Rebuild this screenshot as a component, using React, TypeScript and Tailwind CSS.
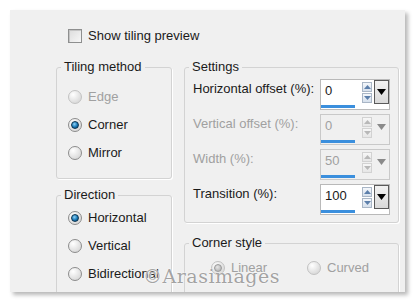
import clsx from "clsx";
import type { ReactNode } from "react";

const Radio = ({ checked, disabled }: { checked?: boolean; disabled?: boolean }) => (
  <span
    className={clsx(
      "flex size-[14px] shrink-0 items-center justify-center rounded-full border bg-[radial-gradient(circle_at_35%_30%,#ffffff,#e4e4e4_55%,#cfcfcf)]",
      disabled ? "border-[#c2c2c2]" : "border-[#8c8c8c]"
    )}
  >
    {checked && (
      <span
        className={clsx(
          "size-[8px] rounded-full border",
          disabled
            ? "border-[#9a9a9a] bg-[radial-gradient(circle_at_40%_35%,#e6e6e6,#a8a8a8)]"
            : "border-[#0d3550] bg-[radial-gradient(circle_at_40%_35%,#8fd3f7,#1576b6_55%,#0a3f66)]"
        )}
      />
    )}
  </span>
);

const RadioRow = ({
  label,
  checked,
  disabled,
}: {
  label: string;
  checked?: boolean;
  disabled?: boolean;
}) => (
  <div className="flex h-[20px] items-center gap-[6px]">
    <Radio checked={checked} disabled={disabled} />
    <span className={disabled ? "text-[#a0a0a0]" : "text-[#1a1a1a]"}>{label}</span>
  </div>
);

const Group = ({
  title,
  className,
  children,
}: {
  title: string;
  className?: string;
  children: ReactNode;
}) => (
  <fieldset
    className={clsx(
      "rounded-[3px] border border-[#d3d3d3] shadow-[1px_1px_0_#ffffff]",
      className
    )}
  >
    <legend className="ml-[4px] px-[3px] leading-[16px] text-[#1a1a1a]">{title}</legend>
    {children}
  </fieldset>
);

const Triangle = ({ up, color }: { up?: boolean; color: string }) => (
  <svg width="7" height="4" viewBox="0 0 7 4">
    <polygon points={up ? "0,4 7,4 3.5,0" : "0,0 7,0 3.5,4"} fill={color} />
  </svg>
);

const NumberField = ({ value, disabled }: { value: string; disabled?: boolean }) => (
  <div
    className={clsx(
      "flex h-[31px] w-[70px] shrink-0 flex-col border",
      disabled ? "border-[#c9c9c9] bg-[#f0f0f0]" : "border-[#b9b9b9] bg-white"
    )}
  >
    <div className="flex h-[24px]">
      <span
        className={clsx(
          "flex-1 pl-[4px] leading-[22px]",
          disabled ? "text-[#a0a0a0]" : "text-[#1a1a1a]"
        )}
      >
        {value}
      </span>
      <div className="flex w-[11px] flex-col justify-center gap-[1px]">
        <span
          className={clsx(
            "flex h-[10px] w-[10px] items-center justify-center border bg-gradient-to-b",
            disabled
              ? "border-[#d2d2d2] from-[#f7f7f7] to-[#e6e6e6]"
              : "border-[#a9b6c6] from-[#f4f7fb] to-[#d6e0ec]"
          )}
        >
          <Triangle up color={disabled ? "#b8b8b8" : "#5c7fab"} />
        </span>
        <span
          className={clsx(
            "flex h-[10px] w-[10px] items-center justify-center border bg-gradient-to-b",
            disabled
              ? "border-[#d2d2d2] from-[#f7f7f7] to-[#e6e6e6]"
              : "border-[#a9b6c6] from-[#f4f7fb] to-[#d6e0ec]"
          )}
        >
          <Triangle color={disabled ? "#b8b8b8" : "#5c7fab"} />
        </span>
      </div>
      <span
        className={clsx(
          "ml-[1px] flex w-[15px] items-center justify-center",
          disabled ? "" : "border border-[#5a5a5a] bg-gradient-to-b from-[#f2f2f2] to-[#d9d9d9]"
        )}
      >
        <svg width="9" height="6" viewBox="0 0 9 6">
          <polygon points="0,0 9,0 4.5,6" fill={disabled ? "#8a8a8a" : "#000000"} />
        </svg>
      </span>
    </div>
    <div className="flex flex-1 items-center">
      <span className="h-[3px] w-[34px] bg-[#3b8fdd]" />
    </div>
  </div>
);

const SettingRow = ({
  label,
  value,
  disabled,
}: {
  label: string;
  value: string;
  disabled?: boolean;
}) => (
  <div className="flex items-start">
    <span
      className={clsx(
        "w-[127px] leading-[20px]",
        disabled ? "text-[#a0a0a0]" : "text-[#1a1a1a]"
      )}
    >
      {label}
    </span>
    <NumberField value={value} disabled={disabled} />
  </div>
);

export default function App() {
  return (
    <div className="relative h-[304px] w-[419px] overflow-hidden bg-white font-['Liberation_Sans',Arial,sans-serif] text-[13px]">
      <div className="ml-[10px] mt-[10px] h-[282px] w-[395px] overflow-hidden bg-[#f0f0f0] pl-[46px] pt-[19px] shadow-[3px_3px_4px_rgba(0,0,0,0.28)]">
        <div className="flex h-[14px] items-center gap-[6px] pl-[12px]">
          <span className="size-[14px] border border-[#8e8f8f] bg-gradient-to-br from-[#dcdcdc] to-[#f7f7f7] shadow-[inset_1px_1px_0_#c4c4c4]" />
          <span className="text-[#1a1a1a]">Show tiling preview</span>
        </div>

        <div className="mt-[16px] flex gap-[12px]">
          <div className="flex w-[116px] flex-col">
            <Group title="Tiling method" className="h-[120px]">
              <div className="flex flex-col gap-[8px] pl-[11px] pt-[12px]">
                <RadioRow label="Edge" disabled />
                <RadioRow label="Corner" checked />
                <RadioRow label="Mirror" />
              </div>
            </Group>
            <Group title="Direction" className="mt-[8px] h-[120px]">
              <div className="flex flex-col gap-[8px] pl-[11px] pt-[5px]">
                <RadioRow label="Horizontal" checked />
                <RadioRow label="Vertical" />
                <RadioRow label="Bidirectional" />
              </div>
            </Group>
          </div>

          <div className="flex w-[215px] flex-col">
            <Group title="Settings" className="h-[164px]">
              <div className="flex flex-col gap-[4px] pl-[8px] pt-[4px]">
                <SettingRow label="Horizontal offset (%):" value="0" />
                <SettingRow label="Vertical offset (%):" value="0" disabled />
                <SettingRow label="Width (%):" value="50" disabled />
                <SettingRow label="Transition (%):" value="100" />
              </div>
            </Group>
            <Group title="Corner style" className="mt-[12px] h-[80px]">
              <div className="flex pl-[26px] pt-[7px]">
                <div className="w-[96px]">
                  <RadioRow label="Linear" checked disabled />
                </div>
                <RadioRow label="Curved" disabled />
              </div>
            </Group>
          </div>
        </div>
      </div>

      <span className="pointer-events-none absolute left-[143px] top-[264px] font-['DejaVu_Serif',serif] text-[19px] leading-[24px] tracking-[0.5px] text-[#a3a3a3] [text-shadow:0_0_1px_#ffffff,0_0_2px_#ffffff]">
        ©Arasimages
      </span>
    </div>
  );
}
